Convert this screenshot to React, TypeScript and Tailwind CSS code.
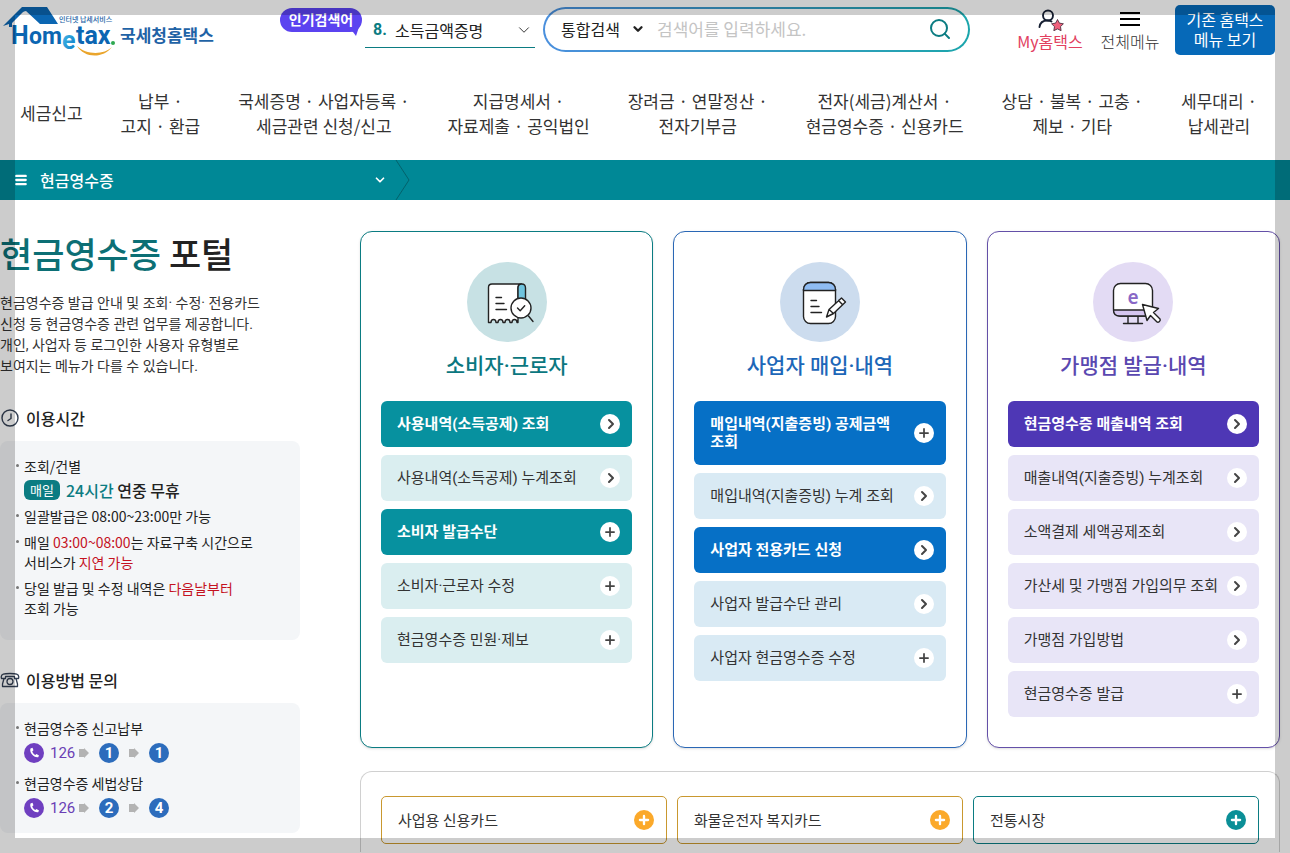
import type { ReactNode } from 'react'
import { ChevronDown, ChevronRight, Menu, Plus, Search } from 'lucide-react'
import clsx from 'clsx'

type Tone = 'teal' | 'blue' | 'purple'

interface CardItem {
  label: string
  icon: 'go' | 'more'
  strong?: boolean
}

interface PortalCard {
  tone: Tone
  title: string
  art: ReactNode
  items: CardItem[]
}

const tones = {
  teal: { border: 'border-[#0b7c82]', circle: 'bg-[#c7e1e4]', title: 'text-[#0b7780]', strong: 'bg-[#07919f]', soft: 'bg-[#daeef0]' },
  blue: { border: 'border-[#2a67b5]', circle: 'bg-[#ccdcee]', title: 'text-[#1d67b8]', strong: 'bg-[#0670c6]', soft: 'bg-[#d9eaf4]' },
  purple: { border: 'border-[#6450a8]', circle: 'bg-[#e3dbf4]', title: 'text-[#5a48b0]', strong: 'bg-[#4e37b5]', soft: 'bg-[#e8e5f7]' },
}

const navItems = [
  ['세금신고'],
  ['납부 ·', '고지 · 환급'],
  ['국세증명 · 사업자등록 ·', '세금관련 신청/신고'],
  ['지급명세서 ·', '자료제출 · 공익법인'],
  ['장려금 · 연말정산 ·', '전자기부금'],
  ['전자(세금)계산서 ·', '현금영수증 · 신용카드'],
  ['상담 · 불복 · 고충 ·', '제보 · 기타'],
  ['세무대리 ·', '납세관리'],
]

function ReceiptArt() {
  return (
    <svg viewBox="0 0 80 80" className="size-20" fill="none" stroke="#222" strokeWidth="1.4" strokeLinecap="round" strokeLinejoin="round">
      <path d="M51 52V26c0-2 1.200-4 3.500-4H25c-2.500 0-3.500 1.500-3.500 3.500V60.500h2.500c0-4 5-4 5 0h2c0-4 5-4 5 0h2c0-4 5-4 5 0h2c0-4 5-4 5 0h1V52" fill="#fff" />
      <path d="M51 41V26c0-5.300 7.500-5.300 7.500 0v15" fill="#6fc4de" />
      <path d="M29 35.500h5.500M29 41.500h8M29 47.500h10.500" />
      <circle cx="54" cy="46" r="10" fill="#fff" />
      <path d="m50.500 46 2.700 2.700 4.500-5M61.500 54l4.500 5.500" />
    </svg>
  )
}

function NoteArt() {
  return (
    <svg viewBox="0 0 80 80" className="size-20" fill="none" stroke="#222" strokeWidth="1.4" strokeLinecap="round" strokeLinejoin="round">
      <rect x="23.500" y="20.500" width="32" height="41" rx="7" fill="#fff" />
      <path d="M23.500 28.500v-1c0-4 3-7 7-7h18c4 0 7 3 7 7v1z" fill="#8fbcf2" />
      <path d="M31 38.500h5.500M31 44.500h8M31 50.500h10.500" />
      <path d="m46.500 55 2.500-7.500L61.500 36l4 4-12 11.500zM49 47.500l4.500 4M58.500 38.500l4.200 4.200" fill="#fff" />
    </svg>
  )
}

function MonitorArt() {
  return (
    <svg viewBox="0 0 80 80" className="size-20" fill="none" stroke="#222" strokeWidth="1.4" strokeLinecap="round" strokeLinejoin="round">
      <path d="M35 54v7.500M45 54v7.500M30.500 61.500h19" />
      <rect x="20.500" y="21.500" width="39" height="32.500" rx="7" fill="#fff" />
      <path d="M20.500 48h39c0 4-2.500 6-6 6h-27c-3.500 0-6-2-6-6z" fill="#d5c5ef" />
      <text x="40" y="42" textAnchor="middle" fontFamily="Noto Sans" fontSize="19" fontWeight="600" fill="#8867c6" stroke="none">e</text>
      <path d="m49.500 42.500 16 4-5 4 6.500 6.500c1 1.500-1.500 4-3 3l-6.500-6.500-3.500 5z" fill="#fff" />
    </svg>
  )
}

const cards: PortalCard[] = [
  {
    tone: 'teal',
    title: '소비자·근로자',
    art: <ReceiptArt />,
    items: [
      { label: '사용내역(소득공제) 조회', icon: 'go', strong: true },
      { label: '사용내역(소득공제) 누계조회', icon: 'go' },
      { label: '소비자 발급수단', icon: 'more', strong: true },
      { label: '소비자·근로자 수정', icon: 'more' },
      { label: '현금영수증 민원·제보', icon: 'more' },
    ],
  },
  {
    tone: 'blue',
    title: '사업자 매입·내역',
    art: <NoteArt />,
    items: [
      { label: '매입내역(지출증빙) 공제금액 조회', icon: 'more', strong: true },
      { label: '매입내역(지출증빙) 누계 조회', icon: 'go' },
      { label: '사업자 전용카드 신청', icon: 'go', strong: true },
      { label: '사업자 발급수단 관리', icon: 'go' },
      { label: '사업자 현금영수증 수정', icon: 'more' },
    ],
  },
  {
    tone: 'purple',
    title: '가맹점 발급·내역',
    art: <MonitorArt />,
    items: [
      { label: '현금영수증 매출내역 조회', icon: 'go', strong: true },
      { label: '매출내역(지출증빙) 누계조회', icon: 'go' },
      { label: '소액결제 세액공제조회', icon: 'go' },
      { label: '가산세 및 가맹점 가입의무 조회', icon: 'go' },
      { label: '가맹점 가입방법', icon: 'go' },
      { label: '현금영수증 발급', icon: 'more' },
    ],
  },
]

const quickLinks = [
  { label: '사업용 신용카드', border: 'border-[#c9982f]', dot: 'bg-[#fba92a]' },
  { label: '화물운전자 복지카드', border: 'border-[#c9982f]', dot: 'bg-[#fba92a]' },
  { label: '전통시장', border: 'border-[#0b7c82]', dot: 'bg-[#0b8f97]' },
]

function Logo() {
  return (
    <a href="#" className="flex w-[280px] shrink-0 items-center">
      <svg viewBox="0 0 118 56" className="h-14 w-[118px] shrink-0" role="img" aria-label="Hometax">
        <defs>
          <linearGradient id="e" x1="0" y1="0" x2="1" y2="1">
            <stop offset="0" stopColor="#4cc4ee" />
            <stop offset="1" stopColor="#0875c1" />
          </linearGradient>
        </defs>
        <path d="M3 26 22 7l2 4-12 12v4H9v-3z" fill="#0b66b2" />
        <path d="M22 7h25l11 17H40L26 11l-4 1z" fill="#0b66b2" />
        <text x="59" y="22" fontFamily="'Noto Sans CJK KR'" fontSize="7" fontWeight="500" fill="#1b62a5">인터넷 납세서비스</text>
        <g fontFamily="Roboto" fontWeight="700" fill="#0b66b2">
          <text x="11" y="44" fontSize="25">H</text>
          <text x="29" y="44" fontSize="23">om</text>
          <text x="62" y="49" fontSize="25" fill="url(#e)">e</text>
          <text x="76" y="44" fontSize="25">tax</text>
        </g>
        <circle cx="113" cy="43" r="2" fill="#2fa84f" />
        <path d="M77 46c9 9 27 9 35 1-9 12-28 11-35-1z" fill="#eaa52c" />
      </svg>
      <span className="mt-3.5 ml-0.5 text-[17px] font-bold text-[#1f63a6]">국세청홈택스</span>
    </a>
  )
}

function Header() {
  return (
    <header className="flex h-15 items-start pr-[15px]">
      <Logo />
      <div className="relative mt-2 flex h-6 w-[82px] shrink-0 items-center justify-center rounded-full bg-[#5b43f0] pb-0.5 text-sm font-bold text-white">
        인기검색어
        <svg viewBox="0 0 12 12" className="absolute right-0.5 -bottom-1 size-3" fill="#5b43f0">
          <path d="M0 5 12 0 8 12 5 8z" />
        </svg>
      </div>
      <button className="mt-2 ml-[3px] flex h-10 w-[170px] shrink-0 items-center border-b border-[#0b7c82] px-2 pt-1">
        <b className="w-[22px] text-left font-[Roboto] text-[#0b7c82]">8.</b>
        <span className="flex-1 text-left">소득금액증명</span>
        <ChevronDown className="-mr-1.5 size-4.5" strokeWidth={1.2} />
      </button>
      <form className="mt-[7px] ml-2 flex h-[45px] flex-1 rounded-full bg-linear-to-r from-[#4a8fdd] to-[#1aa5ab] p-0.5">
        <div className="flex min-w-0 flex-1 items-center rounded-full bg-white px-4 pb-0.5">
          <label className="relative flex items-center">
            <span className="sr-only">검색 구분</span>
            <select className="h-8 w-[88px] appearance-none bg-transparent">
              <option>통합검색</option>
            </select>
            <ChevronDown className="pointer-events-none absolute right-1 size-3.5" strokeWidth={4} />
          </label>
          <input aria-label="검색어" placeholder="검색어를 입력하세요." className="ml-2 min-w-0 flex-1 text-[17px] outline-none placeholder:text-[#c4c4c4]" />
          <button type="button" aria-label="검색" className="text-[#0b7c82]">
            <Search className="size-6" strokeWidth={2} />
          </button>
        </div>
      </form>
      <a href="#" className="mt-[7px] ml-[46px] flex w-[68px] flex-col items-center text-[#e2405f]">
        <svg viewBox="0 0 28 24" className="h-6 w-7">
          <g fill="none" stroke="#172033" strokeWidth="1.9" strokeLinecap="round">
            <circle cx="12" cy="8.500" r="5" />
            <path d="M3.500 20c.500-4 3-6.500 8-6.500 2 0 3 .300 4 1" />
          </g>
          <path d="m22.500 11.500 1.900 3.600 4 .7-2.900 2.800.6 4.100-3.600-1.800-3.700 1.800.7-4.100-2.900-2.800 4-.7z" transform="translate(-1 1)" fill="#f0607c" stroke="#3b2233" strokeWidth=".8" />
        </svg>
        <span className="leading-5 whitespace-nowrap">My홈택스</span>
      </a>
      <button className="mt-[7px] ml-4 flex w-15 flex-col items-center text-[#333]">
        <svg viewBox="0 0 24 24" className="size-6" stroke="#000" strokeWidth="2">
          <path d="M2 6h20M2 12h20M2 18h20" />
        </svg>
        <span className="leading-5 font-light whitespace-nowrap">전체메뉴</span>
      </button>
      <button className="mt-[5px] ml-[15px] h-[50px] w-[100px] shrink-0 rounded-[5px] bg-[#0669b8] pb-0.5 leading-5 text-white">
        기존 홈택스
        <br />
        메뉴 보기
      </button>
    </header>
  )
}

function RoundIcon({ icon }: { icon: CardItem['icon'] }) {
  return (
    <span className="-my-1 flex size-5 shrink-0 items-center justify-center rounded-full bg-white text-[#444]">
      {icon === 'go' ? <ChevronRight className="ml-px size-4" strokeWidth={3} /> : <Plus className="size-3.5" strokeWidth={3} />}
    </span>
  )
}

function ServiceCard({ card }: { card: PortalCard }) {
  const tone = tones[card.tone]
  return (
    <section className={clsx('flex flex-1 flex-col items-center rounded-xl border bg-white px-5 py-[30px] shadow-sm', tone.border)}>
      <div className={clsx('rounded-full', tone.circle)}>{card.art}</div>
      <h2 className={clsx("mt-2 font-[Roboto,'Noto_Sans_CJK_KR',sans-serif] text-[21px] leading-8 font-medium", tone.title)}>{card.title}</h2>
      <ul className="mt-[19px] flex w-full flex-col gap-2 font-[Roboto,'Noto_Sans_CJK_KR',sans-serif]">
        {card.items.map((item) => (
          <li key={item.label}>
            <a
              href="#"
              className={clsx(
                'flex w-full items-center justify-between gap-4 rounded-md py-3.5 pr-3 pl-4 text-[15px] leading-[18px] break-keep',
                item.strong ? [tone.strong, 'font-bold text-white'] : [tone.soft, 'text-[#333]'],
              )}
            >
              <span className="-mr-3">{item.label}</span>
              <RoundIcon icon={item.icon} />
            </a>
          </li>
        ))}
      </ul>
    </section>
  )
}

function Bullet({ children }: { children: ReactNode }) {
  return (
    <li className="flex gap-[5px]">
      <span className="mt-2 size-[3px] shrink-0 rounded-full bg-[#777]" />
      <div>{children}</div>
    </li>
  )
}

function ArrowMark() {
  return (
    <svg viewBox="0 0 10 10" className="size-2.5" fill="#b3b3b3">
      <path d="M0 1h5V0l5 5-5 5V9H0z" />
    </svg>
  )
}

function PhoneSteps({ steps }: { steps: number[] }) {
  return (
    <div className="mt-[5px] flex h-5 items-center font-[Roboto] text-[15px] text-[#6a3fb5]">
      <svg viewBox="0 0 20 20" className="size-5">
        <circle cx="10" cy="10" r="10" fill="#6f3fc0" />
        <path d="M6.500 5.500c-1.500 4 3.500 9.500 7.700 8.700l.8-1.700-2.500-1.600-1.200 1C9.500 11 8.500 9.700 8.300 8.200l1.200-1L8.500 4.700z" fill="#fff" />
      </svg>
      <span className="mr-[5px] ml-1.5 w-6">126</span>
      {steps.map((step, i) => (
        <span key={i} className="mr-2.5 flex items-center gap-2.5">
          <ArrowMark />
          <b className="flex size-5 items-center justify-center rounded-full bg-[#2c6cbc] text-white">{step}</b>
        </span>
      ))}
    </div>
  )
}

function Sidebar() {
  return (
    <aside className="w-[300px] shrink-0">
      <h1 className="text-[35px] leading-[44px] font-medium text-[#222]">
        <span className="text-[#0c6f75]">현금영수증</span> 포털
      </h1>
      <p className="mt-[18px] font-[Roboto,'Noto_Sans_CJK_KR',sans-serif] text-sm leading-[21px] text-[#333]">
        현금영수증 발급 안내 및 조회· 수정· 전용카드
        <br />
        신청 등 현금영수증 관련 업무를 제공합니다.
        <br />
        개인, 사업자 등 로그인한 사용자 유형별로
        <br />
        보여지는 메뉴가 다를 수 있습니다.
      </p>

      <h2 className="mt-[29px] flex h-6 items-center gap-1.5 text-base font-medium">
        <svg viewBox="0 0 20 20" className="size-5" fill="none" stroke="#344054" strokeWidth="1.4" strokeLinecap="round">
          <circle cx="10" cy="10" r="8" />
          <path d="M11 6v4.500L8 12.500" />
        </svg>
        이용시간
      </h2>
      <ul className="mt-[11px] flex flex-col gap-1.5 rounded-lg bg-[#f4f6f8] px-4 pt-[15px] pb-[22px] text-sm leading-5">
        <Bullet>
          조회/건별
          <div className="mt-1 flex items-center gap-1.5 text-base leading-5 font-medium text-[#222]">
            <span className="rounded-md bg-[#0b7c82] px-1.5 text-[13px] font-normal text-white">매일</span>
            <span>
              <span className="text-[#0b7c82]">24시간</span> 연중 무휴
            </span>
          </div>
        </Bullet>
        <Bullet>일괄발급은 08:00~23:00만 가능</Bullet>
        <Bullet>
          매일 <span className="text-[#c4121f]">03:00~08:00</span>는 자료구축 시간으로
          <br />
          서비스가 <span className="text-[#c4121f]">지연 가능</span>
        </Bullet>
        <Bullet>
          당일 발급 및 수정 내역은 <span className="text-[#c4121f]">다음날부터</span>
          <br />
          조회 가능
        </Bullet>
      </ul>

      <h2 className="mt-7 flex h-6 items-center gap-1.5 text-base font-medium">
        <svg viewBox="0 0 20 20" className="size-5" fill="none" stroke="#344054" strokeWidth="1.3" strokeLinejoin="round">
          <path d="M1.500 8.500C0 3.500 5 3.500 10 3.500s10 0 8.500 5h-4V6.500h-9v2z" />
          <path d="M4 8.500 2.500 14v2.500h15V14L16 8.500" />
          <circle cx="10" cy="11.500" r="3" />
        </svg>
        이용방법 문의
      </h2>
      <ul className="mt-[11px] flex flex-col gap-2.5 rounded-lg bg-[#f4f6f8] px-4 py-[15px] text-sm leading-5">
        <Bullet>
          현금영수증 신고납부
          <PhoneSteps steps={[1, 1]} />
        </Bullet>
        <Bullet>
          현금영수증 세법상담
          <PhoneSteps steps={[2, 4]} />
        </Bullet>
      </ul>
    </aside>
  )
}

export default function App() {
  return (
    <div className="min-h-screen bg-white font-['Noto_Sans_CJK_KR',sans-serif] text-base text-[#222]">
      <Header />

      <nav className="flex h-[100px] items-center justify-between pt-[15px] pr-[33px] pb-2.5 pl-5">
        {navItems.map((lines) => (
          <a key={lines[0]} href="#" className="text-center text-[17px] leading-[25px] whitespace-nowrap text-[#333]">
            {lines.map((line) => (
              <span key={line} className="block">
                {line}
              </span>
            ))}
          </a>
        ))}
      </nav>

      <div className="flex h-10 items-stretch bg-[#008896] text-white">
        <button className="flex w-[387px] items-center pl-3.5 font-medium">
          <Menu className="size-3.5" strokeWidth={4} />
          <span className="ml-3 flex-1 text-left">현금영수증</span>
          <ChevronDown className="size-3.5" strokeWidth={3} />
        </button>
        <svg viewBox="0 0 16 40" className="ml-2 h-10 w-4" fill="none" stroke="#03626c">
          <path d="m1 0 13 20L1 40" />
        </svg>
      </div>

      <main className="flex gap-15 pt-[31px] pr-2.5">
        <Sidebar />
        <div className="flex min-w-0 flex-1 flex-col">
          <div className="flex gap-5">
            {cards.map((card) => (
              <ServiceCard key={card.title} card={card} />
            ))}
          </div>
          <div className="mt-[23px] flex flex-1 items-start gap-2.5 rounded-t-xl border border-b-0 border-[#d0d0d0] px-5 pt-6 pb-2">
            {quickLinks.map((link) => (
              <a key={link.label} href="#" className={clsx('flex h-12 flex-1 items-center justify-between rounded-[5px] border bg-white pr-3 pl-4 text-[15px] text-[#333]', link.border)}>
                {link.label}
                <span className={clsx('flex size-5 items-center justify-center rounded-full text-white', link.dot)}>
                  <Plus className="size-3.5" strokeWidth={4} />
                </span>
              </a>
            ))}
          </div>
        </div>
      </main>

      {/* Dimmed frame around the viewport */}
      <div className="pointer-events-none fixed inset-0 border-[15px] border-black/20" />
    </div>
  )
}
